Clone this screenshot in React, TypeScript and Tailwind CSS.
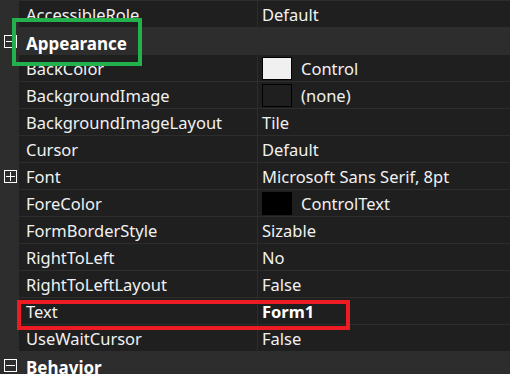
import React from "react";

type Row =
  | { kind: "cat"; label: string; open: boolean }
  | { kind: "prop"; name: string; value: string; swatch?: string; expand?: boolean; bold?: boolean };

const rows: Row[] = [
  { kind: "prop", name: "AccessibleRole", value: "Default" },
  { kind: "cat", label: "Appearance", open: true },
  { kind: "prop", name: "BackColor", value: "Control", swatch: "#f0f0f0" },
  { kind: "prop", name: "BackgroundImage", value: "(none)", swatch: "#1f1f1f" },
  { kind: "prop", name: "BackgroundImageLayout", value: "Tile" },
  { kind: "prop", name: "Cursor", value: "Default" },
  { kind: "prop", name: "Font", value: "Microsoft Sans Serif, 8pt", expand: true },
  { kind: "prop", name: "ForeColor", value: "ControlText", swatch: "#000000" },
  { kind: "prop", name: "FormBorderStyle", value: "Sizable" },
  { kind: "prop", name: "RightToLeft", value: "No" },
  { kind: "prop", name: "RightToLeftLayout", value: "False" },
  { kind: "prop", name: "Text", value: "Form1", bold: true },
  { kind: "prop", name: "UseWaitCursor", value: "False" },
  { kind: "cat", label: "Behavior", open: true },
];

function Box({ plus }: { plus?: boolean }) {
  return (
    <svg width="13" height="13" viewBox="0 0 13 13" className="block">
      <rect x="0.5" y="0.5" width="12" height="12" fill="none" stroke="#ffffff" strokeWidth="1" />
      <line x1="2" y1="6.5" x2="11" y2="6.5" stroke="#ffffff" strokeWidth="1" />
      {plus && <line x1="6.5" y1="2" x2="6.5" y2="11" stroke="#ffffff" strokeWidth="1" />}
    </svg>
  );
}

export default function App() {
  return (
    <div
      className="relative w-[510px] h-[374px] overflow-hidden bg-[#2d2d2d] text-[16.5px] text-[#f1f1f1]"
      style={{ fontFamily: '"Noto Sans", "Open Sans", sans-serif' }}
    >
      <div className="flex flex-col pt-[1px]">
        {rows.map((r, i) =>
          r.kind === "cat" ? (
            <div key={i} className="flex h-[27px] items-center bg-[#2d2d2d]">
              <div className="flex w-[19px] shrink-0 justify-center pl-[1px]">
                <Box plus={!r.open} />
              </div>
              <div className="pl-[7px] pt-[3px] text-[17px] font-bold text-white leading-none">{r.label}</div>
            </div>
          ) : (
            <div key={i} className="flex h-[27px]">
              <div className="flex w-[19px] shrink-0 items-center justify-center pl-[1px] pb-[1px]">
                {r.expand && <Box plus />}
              </div>
              <div className="flex w-[238px] shrink-0 items-center border-b border-[#2d2d2d] bg-[#1f1f1f] pl-[7px] pt-[2px] leading-none">
                {r.name}
              </div>
              <div className="w-[1px] shrink-0 bg-[#2d2d2d]" />
              <div className="flex flex-1 items-center border-b border-[#2d2d2d] bg-[#1f1f1f] pl-[4px] leading-none">
                {r.swatch && (
                  <div
                    className="mr-[9px] h-[23px] w-[30px] shrink-0 border border-black"
                    style={{ backgroundColor: r.swatch }}
                  />
                )}
                <span className={r.bold ? "pt-[2px] font-bold text-white" : "pt-[2px]"}>{r.value}</span>
              </div>
            </div>
          )
        )}
      </div>
      <div className="absolute left-[12px] top-[18px] h-[48px] w-[130px] border-[4px] border-[#22b14c]" />
      <div className="absolute left-[17px] top-[300px] h-[30px] w-[333px] border-[4px] border-[#ed1c24]" />
    </div>
  );
}
